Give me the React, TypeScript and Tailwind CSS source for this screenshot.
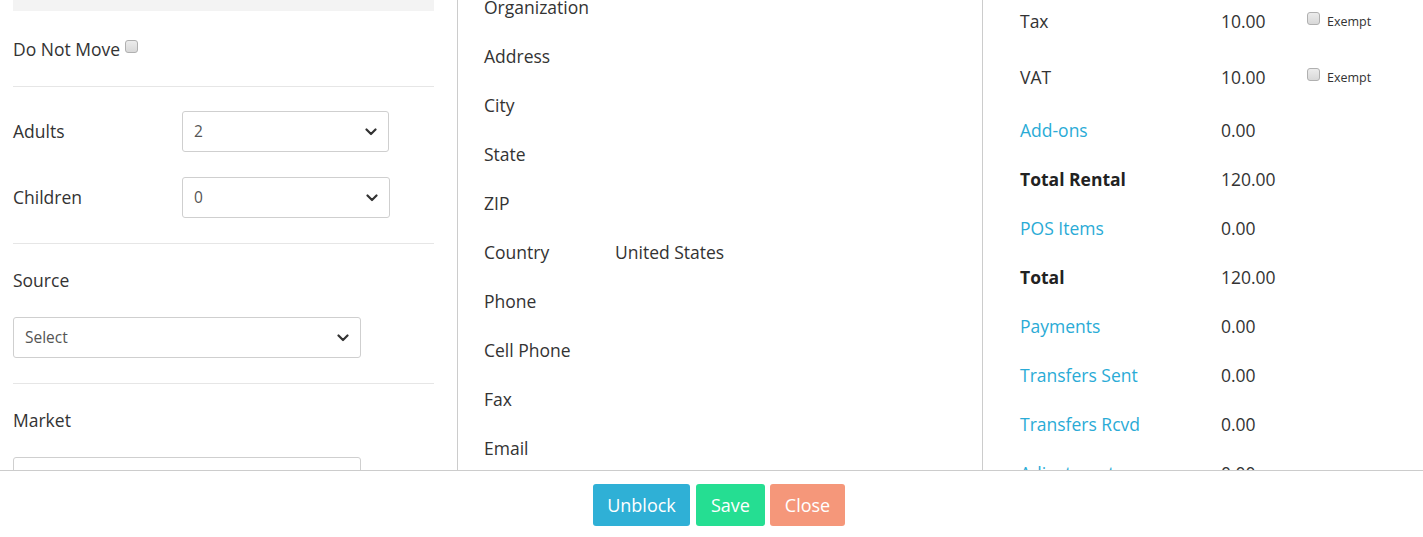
import React from "react";

const Chevron = () => (
  <svg width="12" height="8" viewBox="0 0 12 8" className="shrink-0">
    <polyline points="1.5,1.5 6,6 10.5,1.5" fill="none" stroke="#333" strokeWidth="2.2" strokeLinecap="round" strokeLinejoin="round" />
  </svg>
);

const Check = () => (
  <span className="block w-[13px] h-[13px] rounded-[3px] border border-[#b0b0b0] bg-gradient-to-b from-[#ececec] to-[#d8d8d8] shrink-0" />
);

const SelectBox = ({ value, w }: { value: string; w: string }) => (
  <div className={`${w} h-[41px] shrink-0 border border-[#cfcfcf] rounded-[3px] flex items-center justify-between pl-[11px] pr-[11px] text-[15.5px] text-[#555] bg-white`}>
    <span>{value}</span>
    <Chevron />
  </div>
);

const Hr = () => <div className="h-px shrink-0 bg-[#e6e6e6]" />;

export default function App() {
  const mid = ["Organization", "Address", "City", "State", "ZIP", "Country", "Phone", "Cell Phone", "Fax", "Email"];
  const right: { l: string; v: string; t: "link" | "bold" }[] = [
    { l: "Add-ons", v: "0.00", t: "link" },
    { l: "Total Rental", v: "120.00", t: "bold" },
    { l: "POS Items", v: "0.00", t: "link" },
    { l: "Total", v: "120.00", t: "bold" },
    { l: "Payments", v: "0.00", t: "link" },
    { l: "Transfers Sent", v: "0.00", t: "link" },
    { l: "Transfers Rcvd", v: "0.00", t: "link" },
    { l: "Adjustments", v: "0.00", t: "link" },
  ];
  return (
    <div className="w-full h-[537px] bg-white flex flex-col text-[#333] text-[17.5px] overflow-hidden" style={{ fontFamily: '"Open Sans", sans-serif' }}>
      <div className="h-[470px] flex overflow-hidden shrink-0">
        {/* left */}
        <div className="w-[458px] shrink-0 border-r border-[#cccccc] pl-[13px] pr-[23px] flex flex-col">
          <div className="h-[11px] bg-[#f3f3f3] shrink-0" />
          <div className="h-[75px] flex items-center gap-[5px] shrink-0 pt-[1px]">
            <span>Do Not Move</span>
            <span className="-mt-[5px]"><Check /></span>
          </div>
          <Hr />
          <div className="flex items-center mt-[24px] shrink-0">
            <span className="w-[169px]">Adults</span>
            <SelectBox value="2" w="w-[207px]" />
          </div>
          <div className="flex items-center mt-[25px] shrink-0">
            <span className="w-[169px]">Children</span>
            <SelectBox value="0" w="w-[208px]" />
          </div>
          <div className="mt-[25px] shrink-0"><Hr /></div>
          <div className="mt-[24px] leading-[25px] shrink-0">Source</div>
          <div className="mt-[24px] shrink-0"><SelectBox value="Select" w="w-[348px]" /></div>
          <div className="mt-[25px] shrink-0"><Hr /></div>
          <div className="mt-[24px] leading-[25px] shrink-0">Market</div>
          <div className="mt-[24px] shrink-0"><SelectBox value="" w="w-[348px]" /></div>
        </div>
        {/* middle */}
        <div className="w-[525px] shrink-0 border-r border-[#cccccc] pl-[26px] flex flex-col">
          <div className="-mt-[17px] shrink-0">
            {mid.map((m) => (
              <div key={m} className="h-[49px] flex items-center">
                <span className="w-[131px]">{m}</span>
                {m === "Country" && <span>United States</span>}
              </div>
            ))}
          </div>
        </div>
        {/* right */}
        <div className="flex-1 pl-[37px] flex flex-col">
          <div className="-mt-[7px] shrink-0">
            {["Tax", "VAT"].map((l) => (
              <div key={l} className="h-[56px] flex items-center">
                <span className="w-[201px]">{l}</span>
                <span className="w-[86px]">10.00</span>
                <span className="flex items-center gap-[7px]">
                  <span className="-mt-[5px]"><Check /></span>
                  <span className="text-[12.5px] mt-[2px]">Exempt</span>
                </span>
              </div>
            ))}
            <div className="mt-[1px]">
              {right.map((r) => (
                <div key={r.l} className="h-[49px] flex items-center">
                  <span className={`w-[201px] ${r.t === "link" ? "text-[#2aabd6]" : "font-bold text-[#222]"}`}>{r.l}</span>
                  <span>{r.v}</span>
                </div>
              ))}
            </div>
          </div>
        </div>
      </div>
      <div className="border-t border-[#cccccc] flex-1 flex justify-center pl-[15px] pt-[13px]">
        <button className="w-[97px] h-[42px] rounded-[3px] bg-[#2fb0d6] text-white text-[18px] mr-[6px]">Unblock</button>
        <button className="w-[69px] h-[42px] rounded-[3px] bg-[#25de92] text-white text-[18px] mr-[5px]">Save</button>
        <button className="w-[75px] h-[42px] rounded-[3px] bg-[#f5977a] text-white text-[18px]">Close</button>
      </div>
    </div>
  );
}
